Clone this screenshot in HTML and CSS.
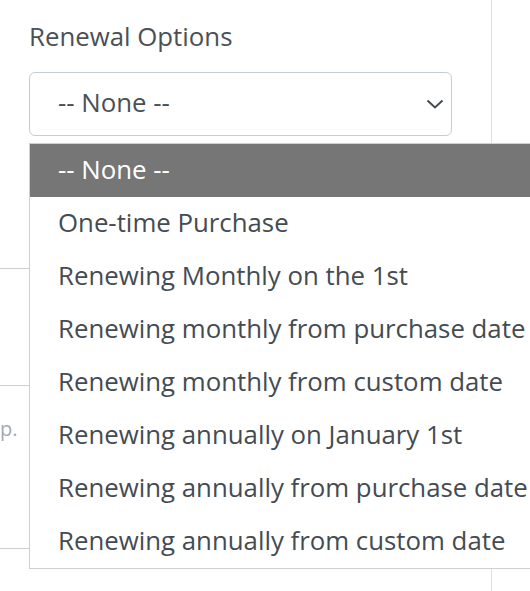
FILE: index.html
```html
<!DOCTYPE html>
<html>
<head>
<meta charset="utf-8">
<link rel="stylesheet" href="styles.css">
</head>
<body>
<div class="page">
  <div class="row row-1">
    <div class="cell">
      <div class="field">
        <div class="label">Renewal Options</div>
        <div class="select">
          <span class="select-value">-- None --</span>
          <svg class="chevron" width="18" height="10" viewBox="0 0 18 10"><path d="M1.5 1.5 L9 8.5 L16.5 1.5" fill="none" stroke="#454b52" stroke-width="2"/></svg>
        </div>
      </div>
    </div>
    <div class="side"></div>
  </div>
  <div class="row row-2">
    <div class="cell"></div>
    <div class="side"></div>
  </div>
  <div class="row row-3">
    <div class="cell"><span class="clipped">p.</span></div>
    <div class="side"></div>
  </div>
  <div class="row row-4">
    <div class="cell"></div>
    <div class="side"></div>
  </div>

  <ul class="dropdown">
    <li class="opt selected">-- None --</li>
    <li class="opt">One-time Purchase</li>
    <li class="opt">Renewing Monthly on the 1st</li>
    <li class="opt">Renewing monthly from purchase date</li>
    <li class="opt">Renewing monthly from custom date</li>
    <li class="opt">Renewing annually on January 1st</li>
    <li class="opt">Renewing annually from purchase date</li>
    <li class="opt">Renewing annually from custom date</li>
  </ul>
</div>
</body>
</html>
```

FILE: styles.css
```css
html, body {
  margin: 0;
  padding: 0;
  background: #ffffff;
}
body {
  font-family: "Open Sans", "Noto Sans", sans-serif;
  color: #495057;
}
.page {
  position: relative;
  width: 530px;
  height: 591px;
  overflow: hidden;
  display: flex;
  flex-direction: column;
}
.row {
  display: flex;
  border-bottom: 1px solid #cfcfd1;
  box-sizing: border-box;
}
.row-1 { height: 269px; }
.row-2 { height: 117px; }
.row-3 { height: 163px; }
.row-4 { flex: 1; border-bottom: none; }
.cell {
  width: 492px;
  border-right: 1px solid #dcdee3;
  box-sizing: border-box;
  position: relative;
}
.side { flex: 1; }
.field {
  padding: 18px 0 0 29px;
}
.label {
  font-size: 25.8px;
  line-height: 36px;
  color: #4a5056;
}
.select {
  margin-top: 18px;
  width: 423px;
  height: 64px;
  box-sizing: border-box;
  border: 1px solid #c5ccd2;
  border-radius: 6px;
  display: flex;
  align-items: center;
  justify-content: space-between;
  padding: 0 7px 4px 28px;
}
.select-value {
  font-size: 25.8px;
  color: #495057;
}
.chevron {
  display: block;
  margin-top: 4px;
}
.clipped {
  display: block;
  margin: 29px 0 0 0;
  font-size: 20px;
  color: #a3a9b0;
}
.dropdown {
  position: absolute;
  left: 29px;
  top: 143px;
  width: 540px;
  margin: 0;
  padding: 0;
  list-style: none;
  border: 1px solid #cfcfcf;
  background: #ffffff;
}
.opt {
  height: 53px;
  line-height: 51px;
  padding-left: 28px;
  font-size: 25.8px;
  color: #454b52;
  white-space: nowrap;
}
.opt.selected {
  background: #767676;
  color: #ffffff;
}
```
